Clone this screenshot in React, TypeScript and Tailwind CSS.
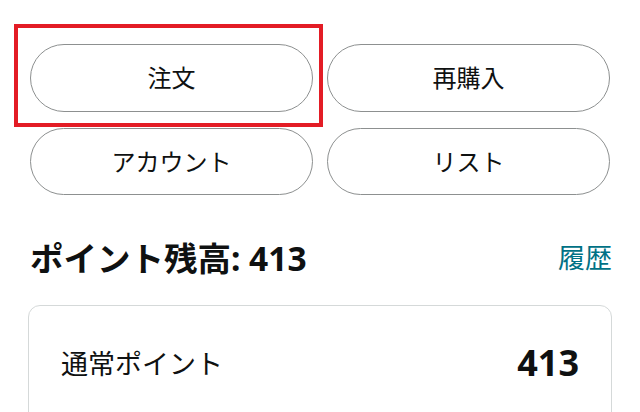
const buttons = ['注文', '再購入', 'アカウント', 'リスト']

export default function App() {
  return (
    <div
      className="relative h-[412px] overflow-hidden bg-white text-[#0f1111]"
      style={{ fontFamily: '"Noto Sans", "Noto Sans CJK JP", sans-serif' }}
    >
      <div className="grid grid-cols-2 gap-x-[14px] gap-y-4 px-[30px] pt-[44px]">
        {buttons.map((label, i) => (
          <button
            key={label}
            type="button"
            className={`flex items-center justify-center rounded-full border-[1.5px] border-[#8d9090] bg-white text-[24px] leading-none ${i < 2 ? 'h-[68px]' : 'h-[67px]'}`}
          >
            {label}
          </button>
        ))}
      </div>

      {/* highlight around 注文 */}
      <div className="pointer-events-none absolute left-[14px] top-[24px] h-[103px] w-[309px] border-4 border-[#e31c25]" />

      <div className="mt-[43px] flex items-center justify-between pl-[30px] pr-[28px]">
        <h2 className="text-[33.5px] font-bold leading-[40px]">ポイント残高: 413</h2>
        <a className="text-[27px] leading-[40px] text-[#007185]">履歴</a>
      </div>

      <div className="mx-[28px] mt-[27px] h-[200px] rounded-xl border border-[#d5d9d9] px-[32px] pt-[29px]">
        <div className="flex h-[56px] items-center justify-between">
          <span className="text-[27px] leading-none">通常ポイント</span>
          <span className="text-[36px] font-bold leading-none">413</span>
        </div>
      </div>
    </div>
  )
}
